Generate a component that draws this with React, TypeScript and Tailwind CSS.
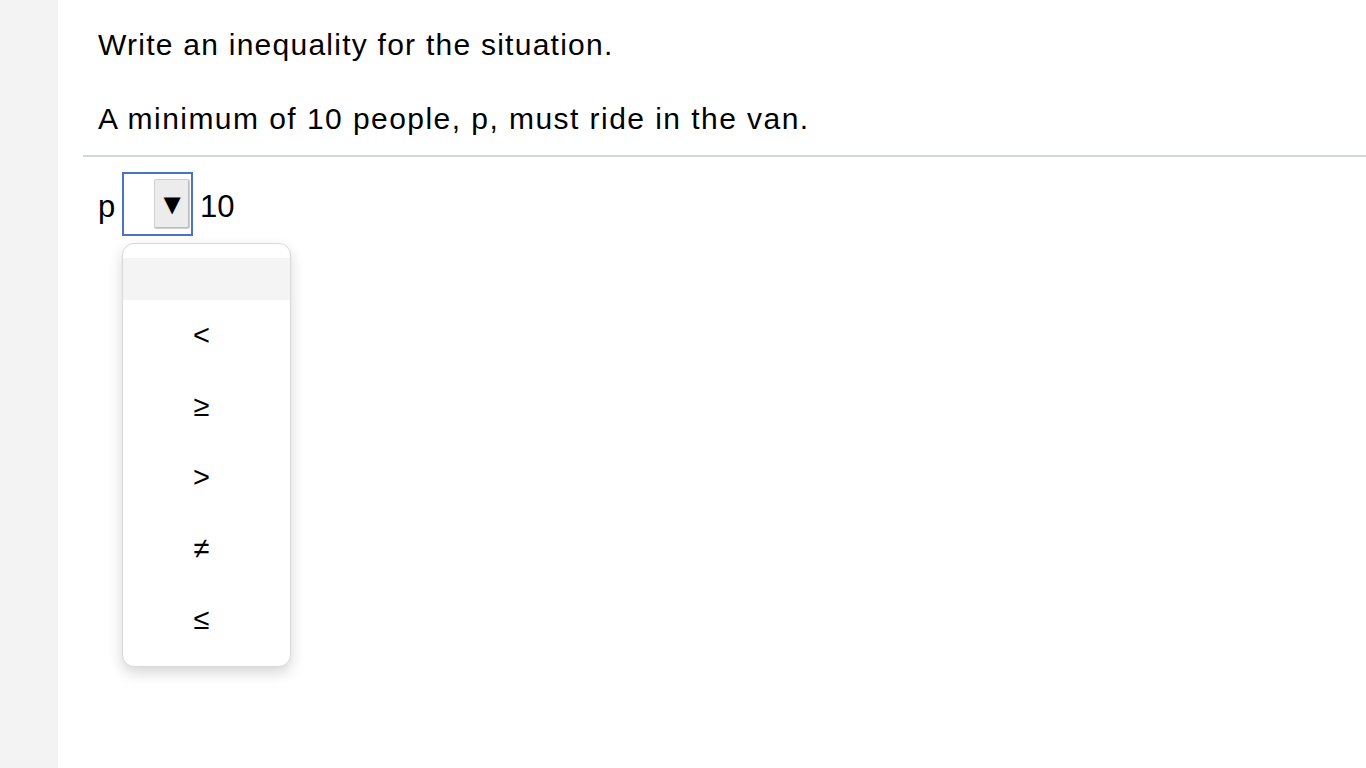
const options = ["<", "≥", ">", "≠", "≤"];

export default function App() {
  return (
    <div
      className="flex w-[1366px] h-[768px] bg-white text-black overflow-hidden"
      style={{ fontFamily: '"Liberation Sans", Arial, sans-serif' }}
    >
      <aside className="w-[58px] shrink-0 bg-[#f3f3f3]" />
      <main className="flex-1 flex flex-col pl-[25px]">
        <div className="pl-[15px] pt-[26px] text-[30px] leading-[37px]">
          <p className="tracking-[1.25px]">Write an inequality for the situation.</p>
          <p className="mt-[37px] tracking-[1.45px]">A minimum of 10 people, p, must ride in the van.</p>
        </div>
        <div className="mt-[18px] h-[2px] bg-[#cfd7e0]" />
        <div className="pl-[15px] pt-[15px]">
          <div className="flex items-center text-[31px] h-[64px]">
            <span className="w-[24px] mt-[7px]">p</span>
            <div className="w-[71px] h-[64px] border-2 border-[#4a72c8] flex items-center justify-end pr-[1px]">
              <div className="w-[36px] h-[50px] bg-[#ececec] border border-[#cfcfcf] rounded-[2px] flex items-center justify-center text-[29px] leading-none shadow-[inset_-1px_-1px_0_#bdbdbd]">
                ▼
              </div>
            </div>
            <span className="ml-[7px] mt-[7px]">10</span>
          </div>
          <ul className="ml-[24px] mt-[7px] w-[169px] pt-[14px] pb-[11px] bg-white border border-[#d8d8d8] rounded-[12px] shadow-[0_6px_14px_rgba(0,0,0,0.16)]">
            <li className="h-[42px] bg-[#f4f4f4]" />
            {options.map((o) => (
              <li key={o} className="h-[71px] flex items-center justify-center pr-[10px] text-[29px]">
                {o}
              </li>
            ))}
          </ul>
        </div>
      </main>
    </div>
  );
}
